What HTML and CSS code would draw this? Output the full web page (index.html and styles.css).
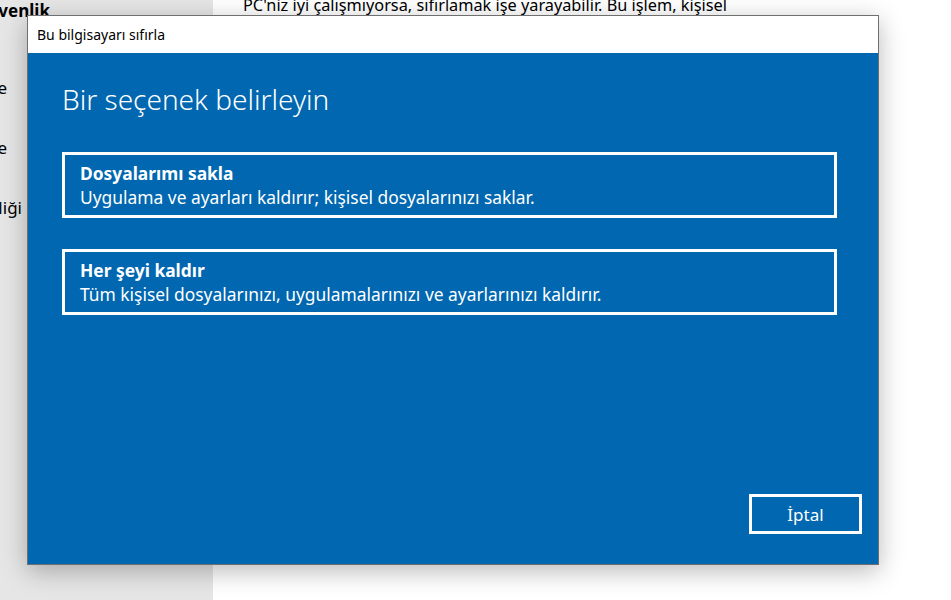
FILE: index.html
```html
<!DOCTYPE html>
<html lang="tr">
<head>
<meta charset="utf-8">
<title>Bu bilgisayarı sıfırla</title>
<link rel="stylesheet" href="styles.css">
</head>
<body>
<div class="page">
  <aside class="sidebar">
    <div class="nav-head">Güvenlik</div>
    <div class="nav-item">Windows Update</div>
    <div class="nav-item">Teslim İyileştirme</div>
    <div class="nav-item">Windows Güvenliği</div>
  </aside>
  <main class="content">
    <p class="intro">PC'niz iyi çalışmıyorsa, sıfırlamak işe yarayabilir. Bu işlem, kişisel</p>
  </main>
</div>

<div class="dialog" role="dialog" aria-labelledby="dlg-title">
  <div class="titlebar" id="dlg-title">Bu bilgisayarı sıfırla</div>
  <div class="dialog-body">
    <h1 class="heading">Bir seçenek belirleyin</h1>
    <div class="options">
      <button class="option">
        <span class="option-title">Dosyalarımı sakla</span>
        <span class="option-desc">Uygulama ve ayarları kaldırır; kişisel dosyalarınızı saklar.</span>
      </button>
      <button class="option">
        <span class="option-title">Her şeyi kaldır</span>
        <span class="option-desc">Tüm kişisel dosyalarınızı, uygulamalarınızı ve ayarlarınızı kaldırır.</span>
      </button>
    </div>
    <div class="footer">
      <button class="cancel">İptal</button>
    </div>
  </div>
</div>
</body>
</html>
```
FILE: styles.css
```css
* { box-sizing: border-box; }
html, body {
  margin: 0;
  padding: 0;
  width: 951px;
  height: 600px;
  overflow: hidden;
  font-family: "Noto Sans", "Open Sans", sans-serif;
  color: #000;
}
.page {
  display: flex;
  height: 600px;
}
.sidebar {
  width: 213px;
  flex: none;
  background: #e6e6e6;
  overflow: hidden;
}
.nav-head {
  font-size: 17px;
  font-weight: 700;
  line-height: 20px;
  margin-top: 1px;
  margin-left: -25px;
  white-space: nowrap;
}
.nav-item {
  font-size: 17px;
  line-height: 20px;
  margin-top: 40px;
  white-space: nowrap;
  direction: rtl;
  text-align: right;
  width: 7px;
}
.nav-item:nth-child(2) { margin-top: 57px; }
.nav-item:nth-child(4) { width: 22px; }
.content {
  flex: 1;
  background: #fff;
  padding-left: 30px;
}
.intro {
  margin: -5px 0 0;
  font-size: 16.3px;
  line-height: 20px;
  white-space: nowrap;
}

.dialog {
  position: absolute;
  left: 27px;
  top: 15px;
  width: 852px;
  height: 550px;
  border: 1px solid #6f6f6f;
  background: #0067b0;
  display: flex;
  flex-direction: column;
  box-shadow: 0 6px 24px rgba(0, 0, 0, 0.28);
}
.titlebar {
  height: 37px;
  flex: none;
  background: #fff;
  font-size: 14px;
  line-height: 37px;
  padding-left: 9px;
  color: #000;
}
.dialog-body {
  flex: 1;
  display: flex;
  flex-direction: column;
  padding: 28px 16px 30px 34px;
  color: #fff;
}
.heading {
  margin: 0;
  font-weight: 300;
  font-size: 28px;
  line-height: 36px;
}
.options {
  display: flex;
  flex-direction: column;
  gap: 31px;
  margin-top: 35px;
}
.option {
  display: flex;
  flex-direction: column;
  align-items: flex-start;
  width: 775px;
  height: 66px;
  border: 3px solid #fff;
  background: transparent;
  color: #fff;
  font-family: inherit;
  padding: 8px 15px 0;
  text-align: left;
}
.option-title {
  font-size: 17.4px;
  font-weight: 700;
  line-height: 20px;
}
.option-desc {
  font-size: 17.4px;
  line-height: 24px;
  margin-top: 2px;
}
.footer {
  margin-top: auto;
  display: flex;
  justify-content: flex-end;
}
.cancel {
  width: 113px;
  height: 40px;
  border: 3px solid #fff;
  background: transparent;
  color: #fff;
  font-family: inherit;
  font-size: 17px;
  padding: 0;
}
```
